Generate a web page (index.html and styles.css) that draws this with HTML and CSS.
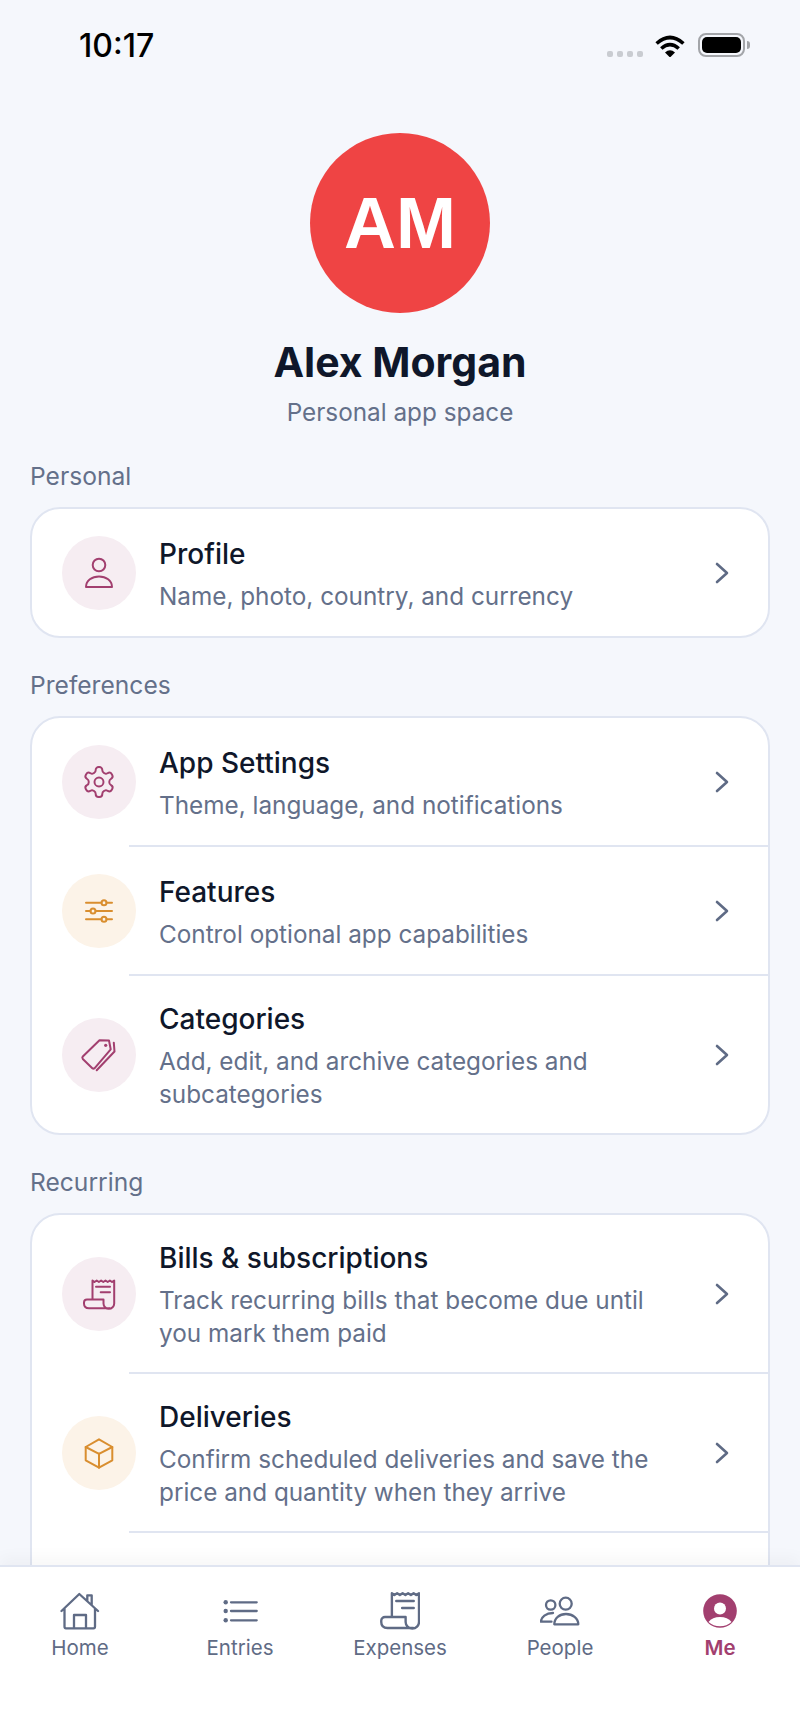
FILE: index.html
```html
<!DOCTYPE html>
<html lang="en">
<head>
<meta charset="utf-8">
<title>Me</title>
<link rel="stylesheet" href="styles.css">
</head>
<body>
<div class="app">
  <div class="scroll">
    <header class="status">
      <span class="time">10:17</span>
      <div class="status-icons">
        <div class="dots"><i></i><i></i><i></i><i></i></div>
        <svg class="wifi" viewBox="0 0 30 22"><path class="wifi-arc" d="M1.6 8.5Q15-3.5 28.4 8.5"/><path class="wifi-arc" d="M6.3 13.5Q15 5.8 23.700 13.500"/><path d="M10 17.400Q15 13 20 17.400L15 22.500Z"/></svg>
        <div class="battery"><div class="battery-fill"></div></div>
        <div class="battery-tip"></div>
      </div>
    </header>
    <section class="hero">
      <div class="avatar">AM</div>
      <h1 class="name">Alex Morgan</h1>
      <p class="tagline">Personal app space</p>
    </section>

    <h2 class="section-label first">Personal</h2>
    <div class="card">
      <div class="row">
        <div class="circle pink"><svg viewBox="0 0 40 40" class="ico"><circle cx="20" cy="12" r="6.300"/><path d="M7 34C7 27.500 13 23.500 20 23.500S33 27.500 33 34Z"/></svg></div>
        <div class="body"><div class="title">Profile</div><div class="sub">Name, photo, country, and currency</div></div>
        <svg class="chev" viewBox="0 0 16 24"><path d="M3 3l10 9-10 9"/></svg>
      </div>
    </div>

    <h2 class="section-label">Preferences</h2>
    <div class="card">
      <div class="row">
        <div class="circle pink"><svg viewBox="0 0 24 24" class="ico gear"><path d="M12.220 2h-.44a2 2 0 0 0-2 2v.18a2 2 0 0 1-1 1.730l-.43.25a2 2 0 0 1-2 0l-.15-.08a2 2 0 0 0-2.730.73l-.22.38a2 2 0 0 0 .73 2.730l.15.1a2 2 0 0 1 1 1.720v.51a2 2 0 0 1-1 1.740l-.15.09a2 2 0 0 0-.73 2.730l.22.38a2 2 0 0 0 2.730.73l.15-.08a2 2 0 0 1 2 0l.43.25a2 2 0 0 1 1 1.730V20a2 2 0 0 0 2 2h.44a2 2 0 0 0 2-2v-.18a2 2 0 0 1 1-1.730l.43-.25a2 2 0 0 1 2 0l.15.08a2 2 0 0 0 2.730-.73l.22-.39a2 2 0 0 0-.73-2.730l-.15-.08a2 2 0 0 1-1-1.740v-.5a2 2 0 0 1 1-1.740l.15-.09a2 2 0 0 0 .73-2.730l-.22-.38a2 2 0 0 0-2.730-.73l-.15.08a2 2 0 0 1-2 0l-.43-.25a2 2 0 0 1-1-1.730V4a2 2 0 0 0-2-2z"/><circle cx="12" cy="12" r="3"/></svg></div>
        <div class="body"><div class="title">App Settings</div><div class="sub">Theme, language, and notifications</div></div>
        <svg class="chev" viewBox="0 0 16 24"><path d="M3 3l10 9-10 9"/></svg>
      </div>
      <div class="sep"></div>
      <div class="row">
        <div class="circle orange"><svg viewBox="0 0 40 40" class="ico"><path d="M7 11.700H22.500M27.500 11.700H33M7 20H11.500M16.500 20H33M7 28.300H22.500M27.500 28.300H33"/><circle cx="25" cy="11.700" r="2.500"/><circle cx="14" cy="20" r="2.500"/><circle cx="25" cy="28.300" r="2.500"/></svg></div>
        <div class="body"><div class="title">Features</div><div class="sub">Control optional app capabilities</div></div>
        <svg class="chev" viewBox="0 0 16 24"><path d="M3 3l10 9-10 9"/></svg>
      </div>
      <div class="sep"></div>
      <div class="row">
        <div class="circle pink"><svg viewBox="0 0 40 40" class="ico"><path d="M3.800 21.500L20.500 5.300 30 5.500 31.700 14.300 15.500 33.300Q14.300 34 13.300 33.200L3.800 24Q2.800 22.700 3.800 21.500Z"/><path d="M17.700 35.300L35.500 16.500 34.800 7.700"/><circle class="dot" cx="26.700" cy="10.300" r="1.600"/></svg></div>
        <div class="body"><div class="title">Categories</div><div class="sub">Add, edit, and archive categories and subcategories</div></div>
        <svg class="chev" viewBox="0 0 16 24"><path d="M3 3l10 9-10 9"/></svg>
      </div>
    </div>

    <h2 class="section-label">Recurring</h2>
    <div class="card">
      <div class="row">
        <div class="circle pink"><svg viewBox="0 0 40 40" class="ico"><path d="M13.500 25V6.500L15.500 8 17.700 6.500 19.900 8 22.100 6.500 24.300 8 26.500 6.500 28.700 8 30.900 6.500 33 8 35.200 6.500V29.500A5 5 0 0 1 24.500 29.500V25.500H8A3 3 0 0 0 5 28.500V29.500Q5 34.300 10 34.300H30.500"/><path d="M17 12.700H31M21.700 18.300H31"/></svg></div>
        <div class="body"><div class="title">Bills &amp; subscriptions</div><div class="sub">Track recurring bills that become due until you mark them paid</div></div>
        <svg class="chev" viewBox="0 0 16 24"><path d="M3 3l10 9-10 9"/></svg>
      </div>
      <div class="sep"></div>
      <div class="row">
        <div class="circle orange"><svg viewBox="0 0 40 40" class="ico"><path d="M20 6.300L33.300 14V27.300L20 34.700 6.700 27.300V14Z"/><path d="M6.700 14L20 20.800 33.300 14M20 20.800V34.700"/></svg></div>
        <div class="body"><div class="title">Deliveries</div><div class="sub">Confirm scheduled deliveries and save the price and quantity when they arrive</div></div>
        <svg class="chev" viewBox="0 0 16 24"><path d="M3 3l10 9-10 9"/></svg>
      </div>
      <div class="sep"></div>
      <div class="row"></div>
    </div>
  </div>

  <nav class="tabs">
    <div class="tab">
      <svg class="tab-ico" viewBox="0 0 40 40"><path d="M1.500 20L19.300 3 38 20M4.500 17.500V35.500Q4.500 37.300 6 37.300H33.500Q35 37.300 35 35.500V17.500M14 37V24H26V37M27.300 10V4.300H31.700V14.300"/></svg>
      <span>Home</span>
    </div>
    <div class="tab">
      <svg class="tab-ico" viewBox="0 0 40 40"><path d="M11 11.300H36.700M11 20H36.700M11 29.300H36.700"/><circle class="dot" cx="5.700" cy="11.300" r="2.200"/><circle class="dot" cx="5.700" cy="20" r="2.200"/><circle class="dot" cx="5.700" cy="29.300" r="2.200"/></svg>
      <span>Entries</span>
    </div>
    <div class="tab">
      <svg class="tab-ico thin" viewBox="4 5 32 31.500"><path d="M13.500 25V6.500L15.500 8 17.700 6.500 19.900 8 22.100 6.500 24.300 8 26.500 6.500 28.700 8 30.900 6.500 33 8 35.200 6.500V29.500A5 5 0 0 1 24.500 29.500V25.500H8A3 3 0 0 0 5 28.500V29.500Q5 34.300 10 34.300H30.500"/><path d="M17 12.700H31M21.700 18.300H31"/></svg>
      <span>Expenses</span>
    </div>
    <div class="tab">
      <svg class="tab-ico" viewBox="0 0 40 40"><circle cx="25.700" cy="12.700" r="6"/><circle cx="10.700" cy="14" r="4.700"/><path d="M14.300 33.300C14.300 27 19.500 23 26 23S38.300 27 38.300 33.300Z"/><path d="M1 30.700C1 26 6 22 13 22M1 30.700H11.500"/></svg>
      <span>People</span>
    </div>
    <div class="tab active">
      <svg class="tab-ico me" viewBox="0 0 40 40"><circle class="me-bg" cx="20" cy="20" r="16.800"/><circle class="me-fg" cx="20" cy="17.600" r="6"/><path class="me-fg" d="M8.500 31C11 27.500 15 26 20 26S29 27.500 31.500 31C28.500 33.800 24.500 35.300 20 35.300S11.500 33.800 8.500 31Z"/></svg>
      <span>Me</span>
    </div>
  </nav>
</div>
</body>
</html>
```
FILE: styles.css
```css
* { box-sizing: border-box; }
html, body { margin: 0; padding: 0; }
body { font-family: Inter, "Liberation Sans", sans-serif; background: #f5f7fc; color: #0f172a; }
.app { width: 800px; height: 1731px; display: flex; flex-direction: column; overflow: hidden; }
.scroll { flex: 1; min-height: 0; overflow: hidden; padding: 0 30px; }

.status { height: 133px; margin: 0 -30px; padding: 28px 50px 0 79px; display: flex; justify-content: space-between; align-items: flex-start; }
.time { font-size: 32px; line-height: 36px; font-weight: 500; color: #000; }
.status-icons { display: flex; align-items: flex-start; padding-top: 5px; }
.dots { display: flex; gap: 4px; margin: 18px 12px 0 0; }
.dots i { width: 6px; height: 6px; border-radius: 2px; background: #c9ccd1; display: block; }
.wifi { width: 30px; height: 22px; margin-top: 2px; fill: #000; }
.wifi-arc { fill: none; stroke: #000; stroke-width: 3.600; }
.battery { width: 47px; height: 24px; margin-left: 13px; border: 2px solid #a3a5a9; border-radius: 8px; padding: 2px; }
.battery-fill { width: 100%; height: 100%; background: #000; border-radius: 5px; }
.battery-tip { width: 3px; height: 8px; margin: 8px 0 0 2px; background: #a3a5a9; border-radius: 0 3px 3px 0; }

.hero { display: flex; flex-direction: column; align-items: center; }
.avatar { width: 180px; height: 180px; border-radius: 50%; background: #ef4444; color: #fff; display: flex; align-items: center; justify-content: center; font-family: "Liberation Sans", Arial, sans-serif; font-weight: 700; font-size: 72px; }
.name { margin: 25px 0 0; font-size: 41px; line-height: 48px; font-weight: 700; color: #0f172a; }
.tagline { margin: 10px 0 0; font-size: 24.300px; line-height: 32px; color: #64708a; }

.section-label { margin: 31px 0 15px; font-size: 24.600px; line-height: 32px; font-weight: 400; color: #64708a; }
.section-label.first { margin-top: 32px; }

.card { background: #fff; border: 2px solid #e0e5f1; border-radius: 30px; width: 740px; }
.row { display: flex; align-items: center; min-height: 127px; padding: 22px 38px 22px 30px; }
.sep { height: 2px; margin-left: 97px; background: #e0e5f1; }
.circle { flex: none; width: 74px; height: 74px; border-radius: 50%; display: flex; align-items: center; justify-content: center; }
.pink { background: #f6edf2; --ic: #a23f6f; }
.orange { background: #fcf3e8; --ic: #d98e2f; }
.ico { width: 40px; height: 40px; fill: none; stroke: var(--ic); stroke-width: 2; stroke-linecap: round; stroke-linejoin: round; }
.ico.gear { width: 36px; height: 36px; stroke-width: 1.300; }
.ico .dot { fill: var(--ic); stroke: none; }
.body { flex: 1; min-width: 0; margin: 4px 0 0 23px; padding-right: 41px; }
.title { font-size: 28px; line-height: 34px; font-weight: 450; color: #0f172a; }
.sub { margin-top: 9px; font-size: 24.300px; line-height: 33px; color: #64708a; }
.chev { flex: none; width: 16px; height: 24px; fill: none; stroke: #5f6b85; stroke-width: 2.600; stroke-linecap: round; stroke-linejoin: round; }

.tabs { flex: none; height: 166px; display: flex; background: #fff; border-top: 2px solid #e0e5f1; box-shadow: 0 -8px 14px rgba(15, 23, 42, .03); position: relative; }
.tab { width: 160px; display: flex; flex-direction: column; align-items: center; padding-top: 24px; color: #5f6b85; font-size: 20.500px; line-height: 26px; }
.tab-ico { width: 40px; height: 40px; margin-bottom: 4px; fill: none; stroke: #5f6b85; stroke-width: 2.300; stroke-linecap: round; stroke-linejoin: round; }
.tab-ico.thin { stroke-width: 1.900; }
.tab-ico .dot { fill: #5f6b85; stroke: none; }
.tab.active { color: #a23f6f; font-weight: 600; }
.me-bg { fill: #a23f6f; stroke: none; }
.me-fg { fill: #fff; stroke: none; }
```
